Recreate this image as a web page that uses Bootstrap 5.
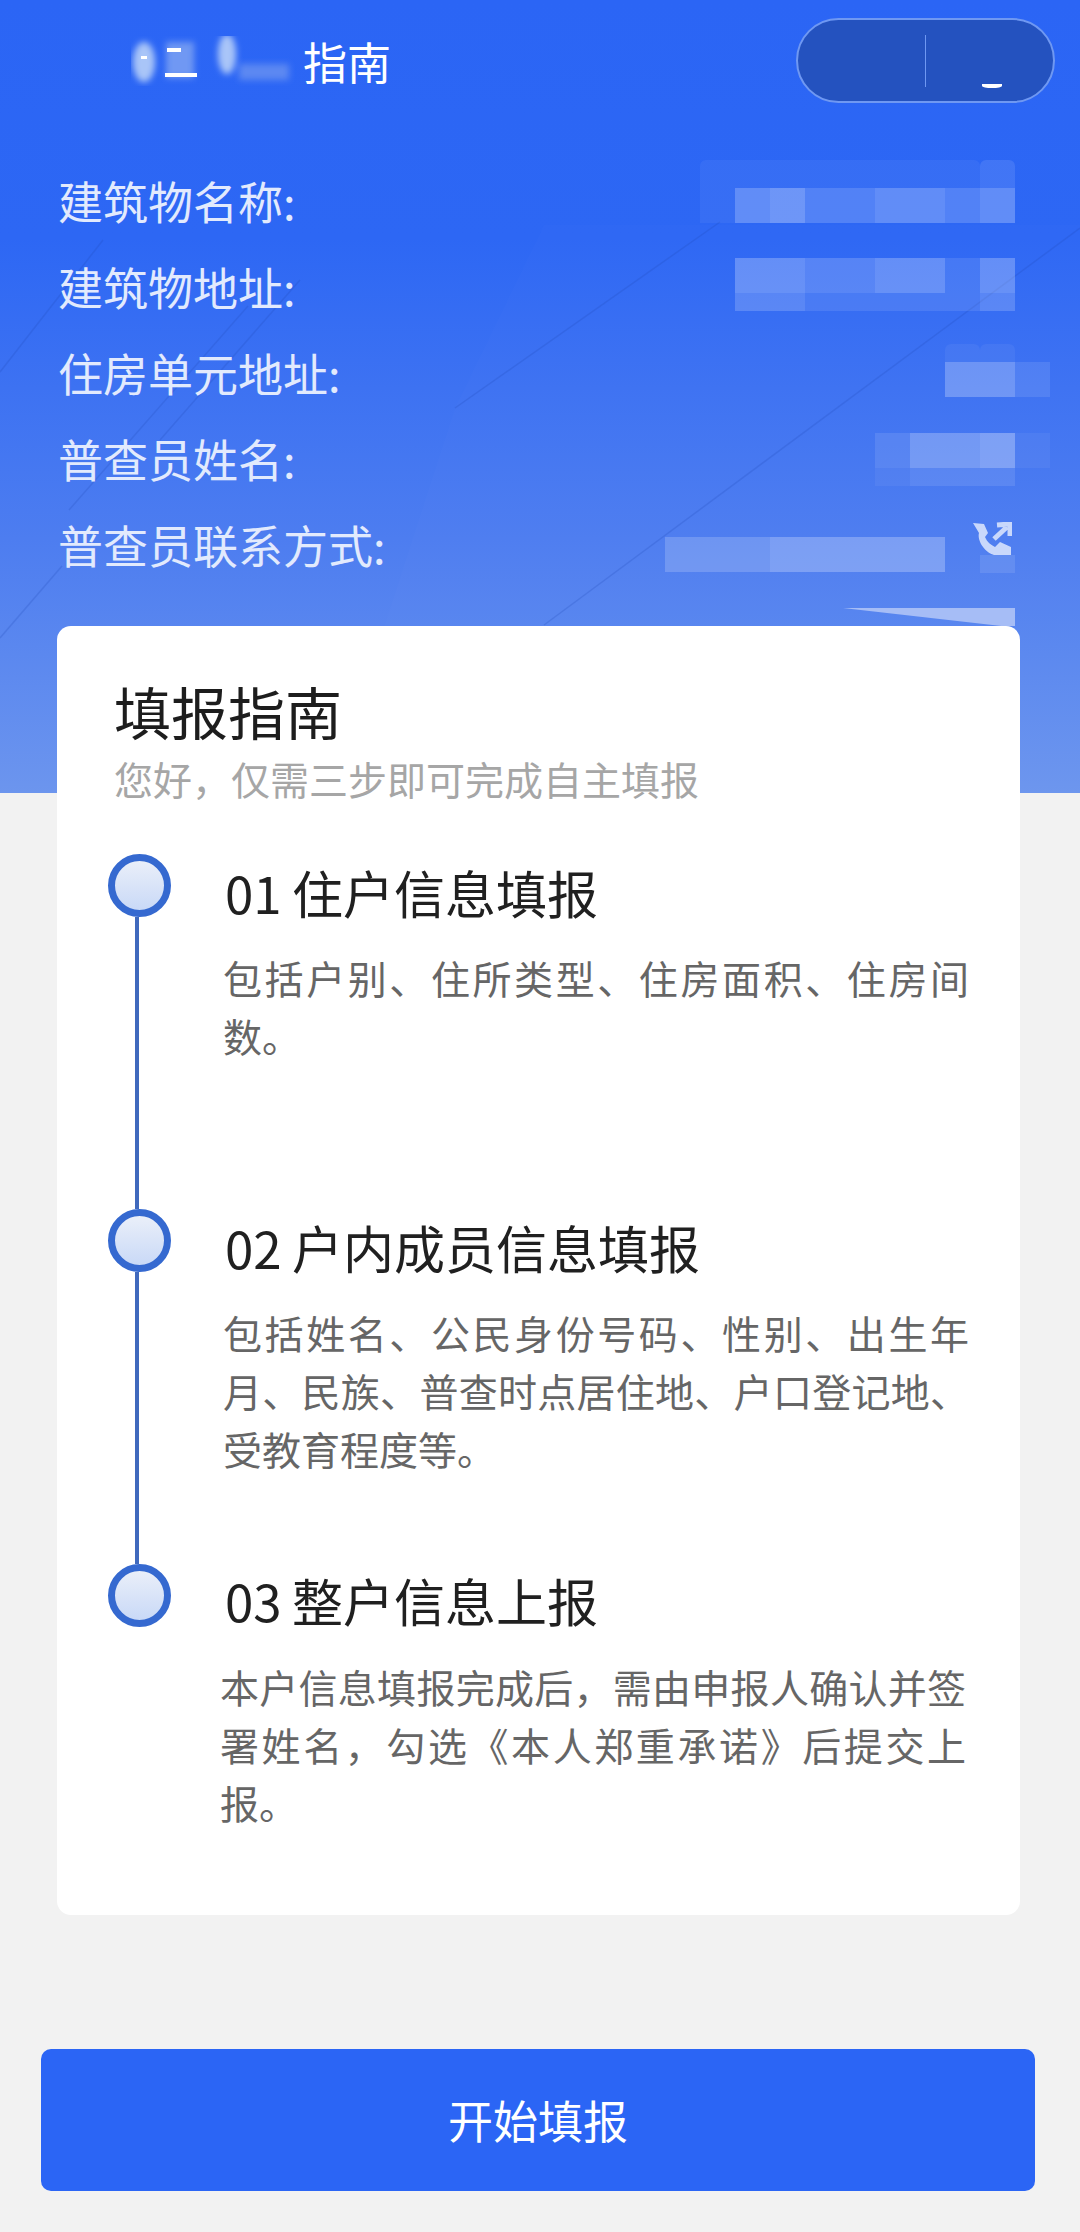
<!DOCTYPE html>
<html lang="zh-CN">
<head>
<meta charset="utf-8">
<title>填报指南</title>
<link href="https://cdn.jsdelivr.net/npm/bootstrap@5.3.0/dist/css/bootstrap.min.css" rel="stylesheet">
<style>
html,body{margin:0;background:#f2f2f2}
body{width:1080px;min-height:2232px;font-family:"Noto Sans CJK SC","Liberation Sans",sans-serif;overflow-x:hidden}
.hero{height:793px;padding:0 30px 0 58px;background:linear-gradient(180deg,#2b65f5 0%,#2d67f4 30%,#4d7df0 68%,#6c95ee 100%);overflow:hidden}
.hero-art{top:0;left:0}
.top-row{height:85px;margin:18px -5px 56px 0;padding:0 0 0 73px}
.blob{width:172px;height:50px}
.top-title{font-size:44px;line-height:1;color:#fff}
.pill{width:259px;height:85px;background:#2452bf;border:2px solid #6f98f2;border-radius:43px}
.pill-left{width:127px}
.pill-div{width:1px;height:52px;background:#6f98f2}
.pill-dash{width:20px;height:4px;margin:50px 0 0 56px;background:#fff;border-radius:0 0 50% 50%}
.info-row{height:86px}
.info-label{font-size:45px;line-height:86px;margin-top:-1px;color:#e2eafd;white-space:nowrap}
.mosaic{flex-shrink:0}
.m1{margin-top:1px}.m2{margin-top:13px}.m3{margin-top:13px}.m4{margin-top:16px}.m5{margin-top:19px}
.band{height:35px}
.band-s{height:18px}
.band-t{height:28px}
.cell{width:35px;height:100%;flex-shrink:0}
.cell-w{width:280px;height:100%;flex-shrink:0}
.m5-main{padding-top:15px}
.m5-call{width:35px;margin-left:35px}
.q0{background:rgba(255,255,255,0)}.q1{background:rgba(255,255,255,.05)}.q2{background:rgba(255,255,255,.1)}.q3{background:rgba(255,255,255,.18)}.q4{background:rgba(255,255,255,.25)}.q5{background:rgba(255,255,255,.31)}.q6{background:rgba(255,255,255,.36)}
.call-ico{width:40px;height:33px;margin-left:-8px;display:block}
.wedge{width:172px;height:18px;margin:19px 35px 0 auto;background:#a6bdf6;clip-path:polygon(0 0,100% 0,100% 100%,92% 100%)}
.guide{width:963px;margin:-167px 0 0 57px;padding:51px 51px 84px 57px;border:0;border-radius:14px;background:#fff}
.guide-title{font-size:57px;line-height:67px;margin:0 0 11px;color:#1d1d1d;font-weight:400}
.guide-sub{font-size:39px;line-height:47px;margin:0 0 52px;color:#a6a6a6;white-space:nowrap}
.step{margin-left:-6px}
.step-tall{height:355px}
.rail{width:62px;flex-shrink:0}
.dot{width:63px;height:63px;border:7px solid #3569d0;border-radius:50%;background:linear-gradient(180deg,#eaeff9,#c9d9f7);flex-shrink:0}
.wire{width:4px;flex-grow:1;margin-left:27px;background:#4069bd}
.step-body{margin-left:53px;width:746px}
.step-title{font-size:51px;line-height:60px;margin:8px 0 26px 2px;color:#202020;font-weight:400;white-space:nowrap;word-spacing:-1px}
.step-text{font-size:39px;line-height:58px;margin:0;color:#666;text-align:justify}
.step-last .step-title{margin:6px 0 27px 2px}
.step-shift{margin:0 3px 0 -3px}
.go-wrap{padding:134px 45px 0 41px}
.go-btn{height:142px;padding-top:6px;font-size:45px;color:#fff;background:#2b65f5;border:0;border-radius:10px;--bs-btn-hover-bg:#2b65f5}
</style>
</head>
<body>
<section class="hero position-relative d-flex flex-column">
  <svg class="hero-art position-absolute" width="1080" height="793" viewBox="0 0 1080 793" aria-hidden="true">
    <polygon points="455,408 544,225 1080,225 1080,793 330,793" fill="#fff" opacity=".012"/>
    <g stroke="#1e48b8" stroke-opacity=".22" stroke-width="1.5" fill="none">
      <line x1="544" y1="625" x2="1080" y2="228"/>
      <line x1="455" y1="408" x2="720" y2="222"/>
      <line x1="0" y1="372" x2="103" y2="240"/>
      <line x1="0" y1="638" x2="62" y2="566"/>
      <line x1="69" y1="510" x2="248" y2="306"/>
      <line x1="160" y1="440" x2="300" y2="280"/>
    </g>
  </svg>
  <div class="top-row d-flex align-items-center position-relative">
    <svg class="blob" viewBox="0 0 172 50" aria-hidden="true">
      <defs><filter id="sm" x="-30%" y="-30%" width="160%" height="160%"><feGaussianBlur stdDeviation="3"/></filter></defs>
      <g filter="url(#sm)">
        <ellipse cx="13" cy="26" rx="11" ry="20" fill="#a9c5f8"/>
        <rect x="35" y="6" width="28" height="36" fill="#6f98f3"/>
        <ellipse cx="96" cy="18" rx="9" ry="20" fill="#a9c5f8"/>
        <rect x="108" y="28" width="50" height="16" fill="#5b88f2"/>
      </g>
      <rect x="36" y="12" width="14" height="4" fill="#fff"/>
      <rect x="34" y="37" width="32" height="4" fill="#fff"/>
      <rect x="10" y="20" width="6" height="3" fill="#fff"/>
    </svg>
    <div class="top-title">指南</div>
    <div class="pill ms-auto d-flex align-items-center">
      <div class="pill-left"></div>
      <div class="pill-div"></div>
      <div class="pill-dash"></div>
    </div>
  </div>

  <div class="info-row d-flex justify-content-between position-relative">
    <div class="info-label">建筑物名称:</div>
    <div class="mosaic m1">
      <div class="band-t d-flex justify-content-end"><div class="cell-w q1 rounded-top"></div><div class="cell q2 rounded-top"></div><div class="cell"></div></div>
      <div class="band d-flex">
        <div class="cell q1"></div><div class="cell q4"></div><div class="cell q5"></div><div class="cell q3"></div><div class="cell q3"></div><div class="cell q4"></div><div class="cell q4"></div><div class="cell q3"></div><div class="cell q4"></div><div class="cell"></div>
      </div>
    </div>
  </div>
  <div class="info-row d-flex justify-content-between position-relative">
    <div class="info-label">建筑物地址:</div>
    <div class="mosaic m2">
      <div class="band d-flex">
        <div class="cell q0"></div><div class="cell q4"></div><div class="cell q4"></div><div class="cell q3"></div><div class="cell q3"></div><div class="cell q4"></div><div class="cell q4"></div><div class="cell q2"></div><div class="cell q4"></div><div class="cell"></div>
      </div>
      <div class="band-s d-flex">
        <div class="cell"></div><div class="cell q3"></div><div class="cell q3"></div><div class="cell q2"></div><div class="cell q2"></div><div class="cell q2"></div><div class="cell q2"></div><div class="cell q2"></div><div class="cell q3"></div><div class="cell"></div>
      </div>
    </div>
  </div>
  <div class="info-row d-flex justify-content-between position-relative">
    <div class="info-label">住房单元地址:</div>
    <div class="mosaic m3">
      <div class="band-s d-flex"><div class="cell q1 rounded-top"></div><div class="cell q1 rounded-top"></div><div class="cell"></div></div>
      <div class="band d-flex"><div class="cell q4"></div><div class="cell q4"></div><div class="cell q2"></div></div>
    </div>
  </div>
  <div class="info-row d-flex justify-content-between position-relative">
    <div class="info-label">普查员姓名:</div>
    <div class="mosaic m4">
      <div class="band d-flex"><div class="cell q2"></div><div class="cell q4"></div><div class="cell q4"></div><div class="cell q5"></div><div class="cell q1"></div></div>
      <div class="band-s d-flex"><div class="cell q1"></div><div class="cell q2"></div><div class="cell q2"></div><div class="cell q2"></div><div class="cell"></div></div>
    </div>
  </div>
  <div class="info-row d-flex justify-content-between position-relative">
    <div class="info-label">普查员联系方式:</div>
    <div class="mosaic m5 d-flex">
      <div class="m5-main">
        <div class="band d-flex">
          <div class="cell q3"></div><div class="cell q3"></div><div class="cell q3"></div><div class="cell q4"></div><div class="cell q4"></div><div class="cell q4"></div><div class="cell q4"></div><div class="cell q4"></div>
        </div>
      </div>
      <div class="m5-call">
        <svg class="call-ico" viewBox="0 0 40 33" aria-hidden="true">
          <path d="M1 1 L12 2 L16 11 L13 15 C15 20 19 23 23 25 L28 20 L39 25 L39 33 L22 33 C12 30 5 18 7 11 Z" fill="#c9d8fb"/>
          <path d="M22 17 L35 5 M25 3 L38 2 L38 14" stroke="#c9d8fb" stroke-width="5" fill="none"/>
        </svg>
        <div class="band-s q2"></div>
      </div>
      <div class="cell"></div>
    </div>
  </div>
  <div class="wedge position-relative"></div>
</section>

<section class="card guide position-relative">
  <h1 class="guide-title">填报指南</h1>
  <p class="guide-sub">您好，仅需三步即可完成自主填报</p>

  <div class="step step-tall d-flex">
    <div class="rail d-flex flex-column"><div class="dot"></div><div class="wire"></div></div>
    <div class="step-body">
      <h2 class="step-title">01 住户信息填报</h2>
      <p class="step-text">包括户别、住所类型、住房面积、住房间数。</p>
    </div>
  </div>
  <div class="step step-tall d-flex">
    <div class="rail d-flex flex-column"><div class="dot"></div><div class="wire"></div></div>
    <div class="step-body">
      <h2 class="step-title">02 户内成员信息填报</h2>
      <p class="step-text">包括姓名、公民身份号码、性别、出生年月、民族、普查时点居住地、户口登记地、受教育程度等。</p>
    </div>
  </div>
  <div class="step step-last d-flex">
    <div class="rail d-flex flex-column"><div class="dot"></div></div>
    <div class="step-body">
      <h2 class="step-title">03 整户信息上报</h2>
      <p class="step-text step-shift">本户信息填报完成后，需由申报人确认并签署姓名，勾选《本人郑重承诺》后提交上报。</p>
    </div>
  </div>
</section>

<div class="go-wrap">
  <button type="button" class="btn go-btn w-100 d-flex align-items-center justify-content-center">开始填报</button>
</div>
<script src="https://cdn.jsdelivr.net/npm/bootstrap@5.3.0/dist/js/bootstrap.bundle.min.js"></script>
</body>
</html>
